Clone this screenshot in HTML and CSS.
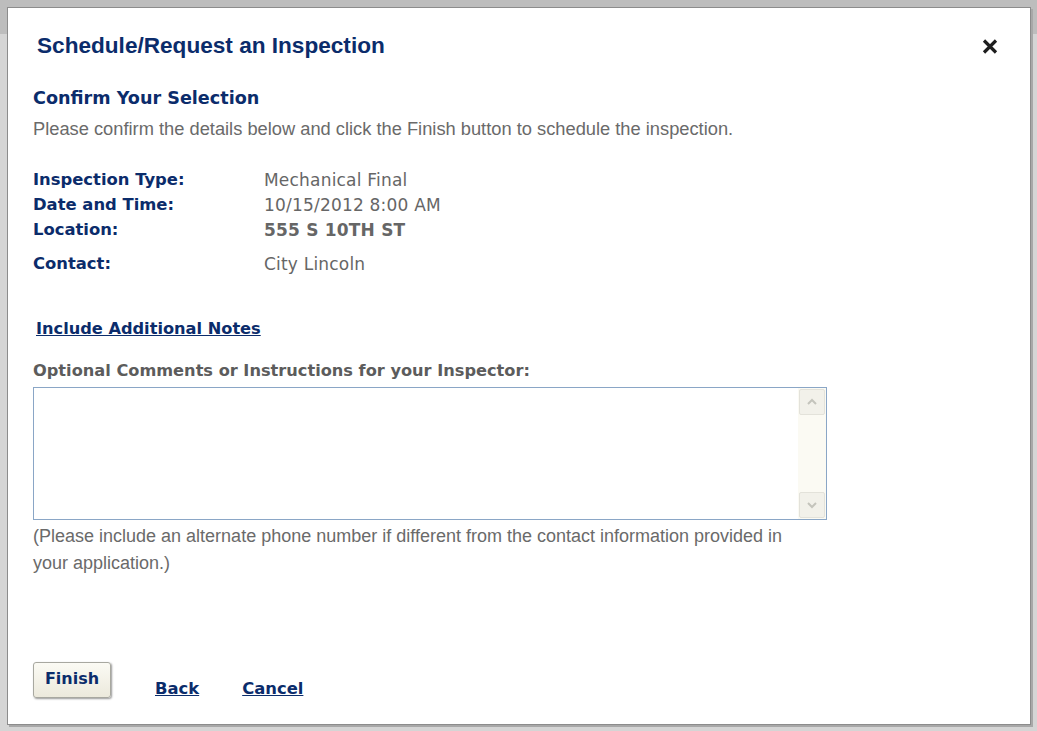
FILE: index.html
```html
<!DOCTYPE html>
<html>
<head>
<meta charset="utf-8">
<link rel="stylesheet" href="styles.css">
</head>
<body>
<div class="backdrop">
  <div class="dialog">
    <div class="dialog-head">
      <h1 class="dialog-title">Schedule/Request an Inspection</h1>
      <svg class="close" width="16" height="15" viewBox="0 0 16 15"><path d="M2 1.5 L14 13.5 M14 1.5 L2 13.5" stroke="#1e1e1e" stroke-width="3.2" stroke-linecap="butt"/></svg>
    </div>
    <h2 class="section-title">Confirm Your Selection</h2>
    <p class="intro">Please confirm the details below and click the Finish button to schedule the inspection.</p>
    <div class="details">
      <div class="row"><span class="label">Inspection Type:</span><span class="value">Mechanical Final</span></div>
      <div class="row"><span class="label">Date and Time:</span><span class="value">10/15/2012 8:00 AM</span></div>
      <div class="row"><span class="label">Location:</span><span class="value strong">555 S 10TH ST</span></div>
      <div class="row row-contact"><span class="label">Contact:</span><span class="value">City Lincoln</span></div>
    </div>
    <a class="notes-link" href="#">Include Additional Notes</a>
    <div class="comments-label">Optional Comments or Instructions for your Inspector:</div>
    <div class="textarea">
      <div class="ta-body"></div>
      <div class="ta-scroll">
        <div class="ta-btn"><svg width="12" height="8" viewBox="0 0 12 8"><path d="M2 6 L6 2 L10 6" fill="none" stroke="#c4c4bc" stroke-width="2"/></svg></div>
        <div class="ta-track"></div>
        <div class="ta-btn"><svg width="12" height="8" viewBox="0 0 12 8"><path d="M2 2 L6 6 L10 2" fill="none" stroke="#c4c4bc" stroke-width="2"/></svg></div>
      </div>
    </div>
    <p class="hint">(Please include an alternate phone number if different from the contact information provided in your application.)</p>
    <div class="actions">
      <button class="finish">Finish</button>
      <a class="action-link" href="#">Back</a>
      <a class="action-link" href="#">Cancel</a>
    </div>
  </div>
</div>
</body>
</html>
```
FILE: styles.css
```css
html, body {
  margin: 0;
  padding: 0;
}
body {
  width: 1037px;
  height: 731px;
  overflow: hidden;
  background: #d5d5d5;
}
.backdrop {
  height: 731px;
  padding: 7px 0 0 7px;
  box-sizing: border-box;
  background: linear-gradient(#bdbdbd 0, #bdbdbd 34px, #d5d5d5 34px);
}
.dialog {
  width: 1024px;
  height: 718px;
  box-sizing: border-box;
  background: #fff;
  border: 1px solid #8c8c8c;
  box-shadow: 2px 2px 0 #a8a8a8;
  padding: 0 0 0 25px;
  display: flex;
  flex-direction: column;
  font-family: "DejaVu Sans", Verdana, sans-serif;
}
.dialog-head {
  display: flex;
  justify-content: space-between;
  align-items: center;
  padding: 25px 32px 0 4px;
}
.dialog-title {
  margin: 0;
  font-family: "Liberation Sans", Arial, sans-serif;
  font-size: 22.6px;
  font-weight: bold;
  color: #0b2c6b;
}
.close {
  display: block;
}
.section-title {
  margin: 29px 0 0 0;
  font-size: 17.6px;
  font-weight: bold;
  color: #0b2c6b;
}
.intro {
  margin: 10px 0 0 0;
  font-family: "Liberation Sans", Arial, sans-serif;
  font-size: 18.3px;
  color: #6a6a6a;
}
.details {
  margin-top: 27px;
  display: flex;
  flex-direction: column;
}
.row {
  display: flex;
  height: 25px;
  align-items: center;
}
.row-contact {
  margin-top: 9px;
}
.label {
  width: 231px;
  font-size: 16.4px;
  font-weight: bold;
  color: #0b2c6b;
}
.value {
  font-size: 17px;
  letter-spacing: 0.2px;
  color: #666;
}
.value.strong {
  font-weight: bold;
  letter-spacing: 0.2px;
}
.notes-link {
  margin: 43px 0 0 3px;
  align-self: flex-start;
  font-size: 16.2px;
  font-weight: bold;
  color: #0b2c6b;
}
.comments-label {
  margin-top: 23px;
  font-size: 16.2px;
  font-weight: bold;
  color: #5c5c5c;
}
.textarea {
  margin-top: 7px;
  width: 794px;
  height: 133px;
  box-sizing: border-box;
  border: 1px solid #8aa6c6;
  display: flex;
}
.ta-body {
  flex: 1;
}
.ta-scroll {
  width: 26px;
  background: #fbfaf3;
  display: flex;
  flex-direction: column;
  padding: 1px;
}
.ta-btn {
  height: 24px;
  background: #f2f1ea;
  border: 1px solid #e3e2da;
  border-radius: 2px;
  display: flex;
  align-items: center;
  justify-content: center;
}
.ta-track {
  flex: 1;
}
.hint {
  margin: 3px 0 0 0;
  width: 775px;
  font-family: "Liberation Sans", Arial, sans-serif;
  font-size: 18px;
  line-height: 27px;
  color: #6a6a6a;
}
.actions {
  margin-top: auto;
  margin-bottom: 26px;
  display: flex;
  align-items: flex-end;
}
.finish {
  width: 78px;
  height: 36px;
  font-family: "DejaVu Sans", Verdana, sans-serif;
  font-size: 16px;
  font-weight: bold;
  color: #0b2c6b;
  background: linear-gradient(#fbfaf4, #ece9dc);
  border: 1px solid #a8a8a0;
  border-radius: 3px;
  box-shadow: 1px 1px 2px #9a9a9a;
  padding: 0 0 4px 0;
}
.action-link {
  margin-left: 44px;
  font-size: 16.4px;
  font-weight: bold;
  color: #0b2c6b;
  line-height: 18px;
  margin-bottom: 0;
}
.action-link + .action-link {
  margin-left: 43px;
}
```
